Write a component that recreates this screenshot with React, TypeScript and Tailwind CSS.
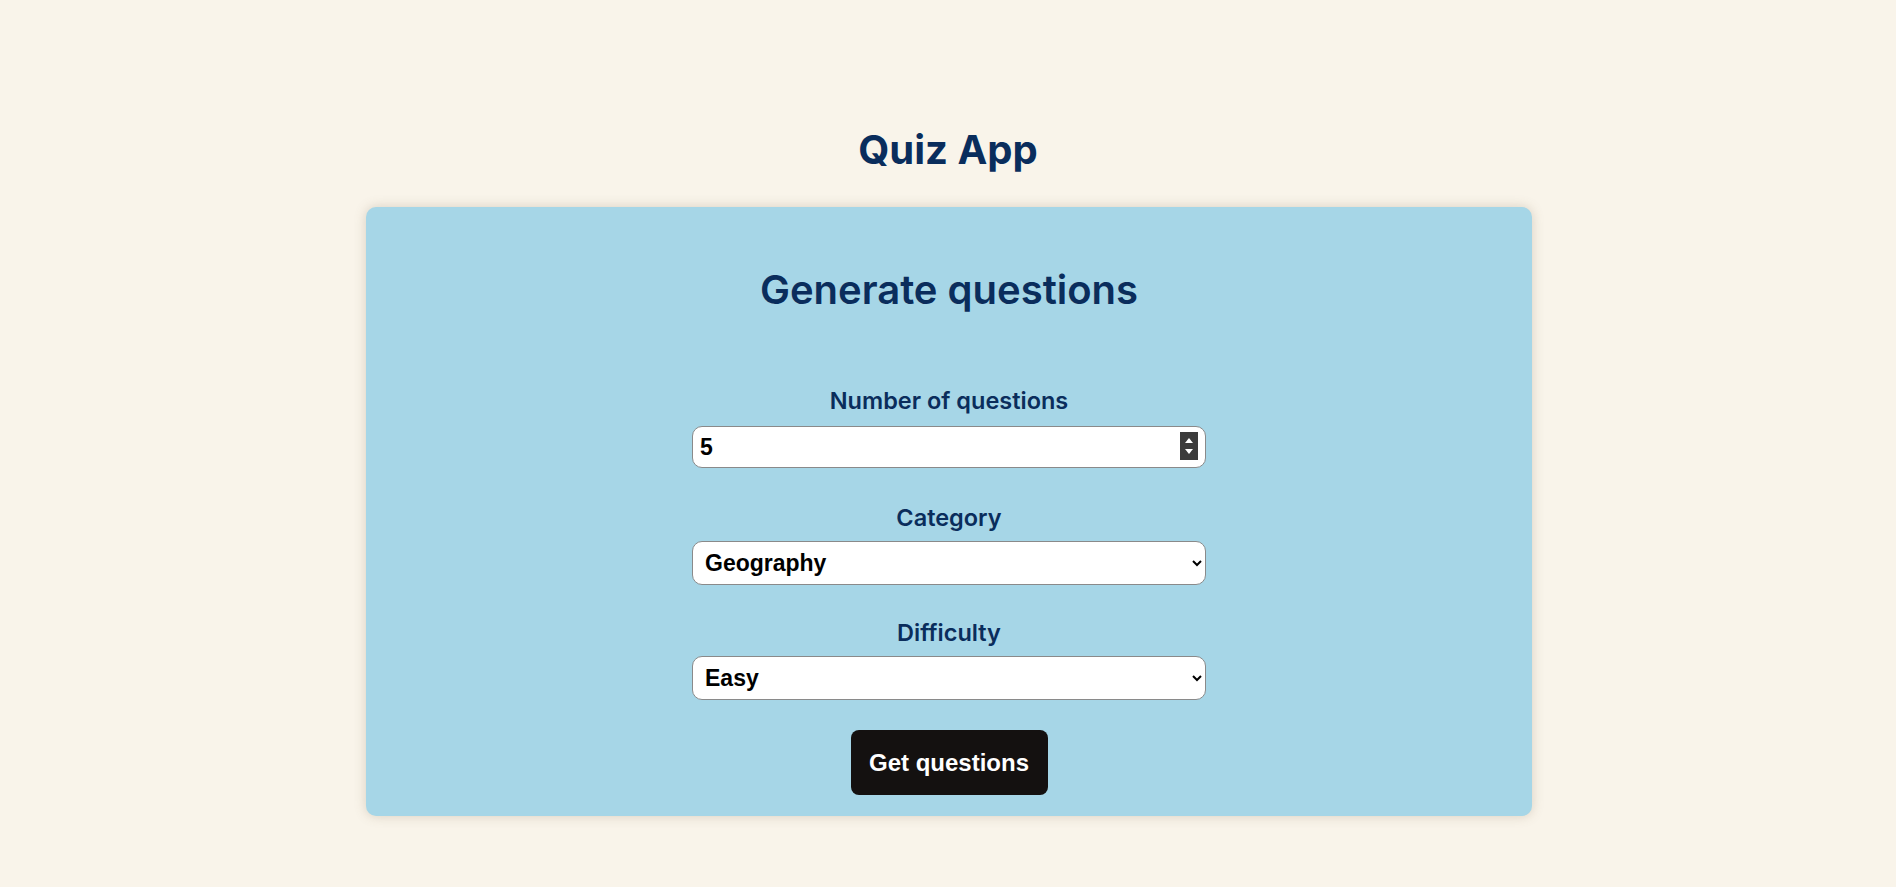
import { useState } from 'react'

const categories = ['General Knowledge', 'Geography', 'History', 'Science & Nature', 'Sports']
const difficulties = ['Easy', 'Medium', 'Hard']

export default function App() {
  const [amount, setAmount] = useState(5)
  const [category, setCategory] = useState('Geography')
  const [difficulty, setDifficulty] = useState('Easy')

  return (
    <div className="min-h-screen bg-[#f9f4ea] flex flex-col items-center pt-[126px] font-['Inter',sans-serif]">
      <h1 className="text-[40px] leading-[48px] font-bold text-[#0a2d5c]">Quiz App</h1>

      {/* card */}
      <div className="mt-[33px] ml-[2px] w-[1166px] bg-[#a6d6e7] rounded-[10px] shadow-[0_0_12px_rgba(120,100,70,0.25)] flex flex-col items-center pt-[60px] pb-[21px]">
        <h2 className="text-[40px] leading-[46px] font-semibold text-[#0a2d5c]">Generate questions</h2>

        <form className="mt-[73px] flex flex-col items-center" onSubmit={(e) => e.preventDefault()}>
          <label className="text-[23.5px] leading-[29px] font-semibold text-[#0a2d5c]" htmlFor="amount">
            Number of questions
          </label>
          <div className="relative mt-[11px]">
            <input
              id="amount"
              type="number"
              min={1}
              max={50}
              value={amount}
              onChange={(e) => setAmount(Number(e.target.value))}
              className="w-[514px] h-[42px] bg-white border border-[#8a8a8a] rounded-[10px] px-[7px] text-[23px] font-bold text-black font-['Liberation_Sans',Arial,sans-serif] outline-none [appearance:textfield] [&::-webkit-inner-spin-button]:appearance-none [&::-webkit-outer-spin-button]:appearance-none"
            />
            {/* spinner */}
            <div className="absolute right-[8px] top-[6px] w-[18px] h-[28px] bg-[#3b3b3b] flex flex-col items-center justify-center gap-[6px] pointer-events-none">
              <svg width="8" height="5" viewBox="0 0 8 5"><path d="M0 5 L4 0 L8 5 Z" fill="#fff" /></svg>
              <svg width="8" height="5" viewBox="0 0 8 5"><path d="M0 0 L4 5 L8 0 Z" fill="#fff" /></svg>
            </div>
          </div>

          <label className="mt-[35px] text-[23.5px] leading-[29px] font-semibold text-[#0a2d5c]" htmlFor="category">
            Category
          </label>
          <select
            id="category"
            value={category}
            onChange={(e) => setCategory(e.target.value)}
            className="mt-[9px] w-[514px] h-[44px] bg-white border border-[#8a8a8a] rounded-[10px] px-[8px] text-[23px] font-bold text-black font-['Liberation_Sans',Arial,sans-serif] outline-none"
          >
            {categories.map((c) => (
              <option key={c}>{c}</option>
            ))}
          </select>

          <label className="mt-[33px] text-[23.5px] leading-[29px] font-semibold text-[#0a2d5c]" htmlFor="difficulty">
            Difficulty
          </label>
          <select
            id="difficulty"
            value={difficulty}
            onChange={(e) => setDifficulty(e.target.value)}
            className="mt-[9px] w-[514px] h-[44px] bg-white border border-[#8a8a8a] rounded-[10px] px-[8px] text-[23px] font-bold text-black font-['Liberation_Sans',Arial,sans-serif] outline-none"
          >
            {difficulties.map((d) => (
              <option key={d}>{d}</option>
            ))}
          </select>

          <button
            type="submit"
            className="mt-[30px] w-[197px] h-[65px] bg-[#141110] rounded-[8px] text-white text-[24px] font-bold font-['Liberation_Sans',Arial,sans-serif]"
          >
            Get questions
          </button>
        </form>
      </div>
    </div>
  )
}
